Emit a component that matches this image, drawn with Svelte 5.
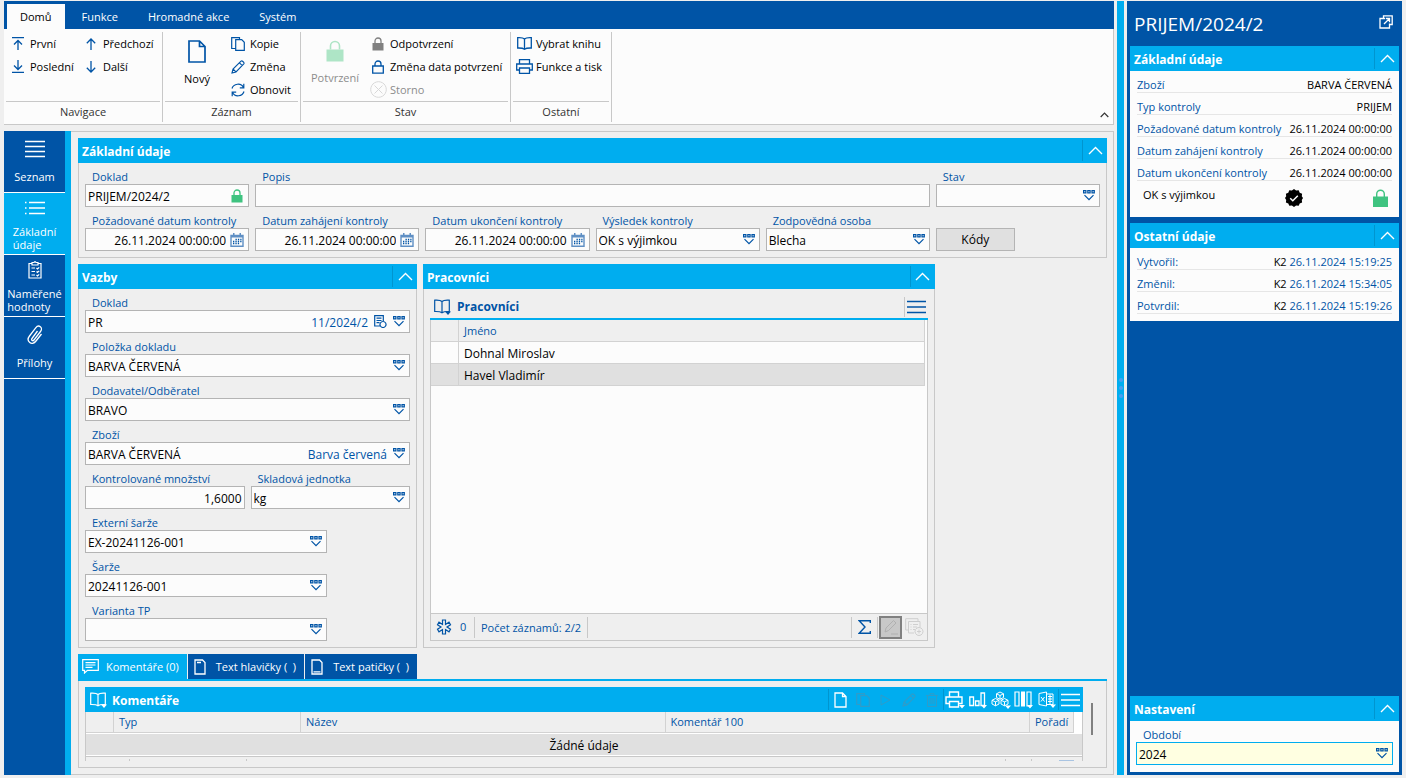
<script>
  // w, h = native size; d = stroked path; f = filled path; s = stroke width
  const icons = {
    first: { w: 12, h: 13, d: 'M0 .7H12M6 13V3.5M2 7.5l4-4 4 4', s: 1.3 },
    last: { w: 12, h: 13, d: 'M0 12.3H12M6 0v9.5M2 5.5l4 4 4-4', s: 1.3 },
    up: { w: 10, h: 12, d: 'M5 12V1M.8 5.2L5 1l4.2 4.2', s: 1.3 },
    down: { w: 10, h: 12, d: 'M5 0v11M.8 6.8L5 11l4.2-4.2', s: 1.3 },
    pageBig: { w: 18, h: 23, d: 'M1 1H11.5L17 6.5V22H1ZM11.5 1V6.5H17', s: 1.7 },
    page: { w: 13, h: 16, d: 'M1 1H8.5L12 4.5V15H1ZM8.5 1V4.5H12', s: 1.3 },
    copy: { w: 14, h: 14, d: 'M4.5 11.5H.7V.7H8.5V2.5M4.7 2.7h6l2.6 2.6v8H4.7Z', s: 1.2 },
    pencil: { w: 14, h: 14, d: 'M1 13l1-4L10 1.2c1-1 3.8 1.6 2.8 2.7L5 12ZM8.5 2.8l2.8 2.8M2 9l3 3', s: 1.1 },
    refresh: { w: 14, h: 14, d: 'M1 5.5C2.5 .5 10 -.5 12.5 4.5M12.8 .8V4.8H8.8M13 8.5C11.5 13.5 4 14.5 1.5 9.5M1.2 13.2V9.2H5.2', s: 1.2 },
    lock: { w: 14, h: 14, d: 'M4 6V4a3 3 0 0 1 6 0V6', f: 'M1.5 6h11v7.5h-11z', s: 1.3 },
    lockOpen: { w: 14, h: 14, d: 'M4 6V4a3 3 0 0 1 6 0V6M1.7 6h10.6v7.2H1.7z', s: 1.3 },
    lockMid: { w: 15, h: 18, d: 'M3.700 8V5a3.800 3.800 0 0 1 7.600 0v3', f: 'M0 7.500h15V18H0z', s: 1.4 },
    lockBig: { w: 18, h: 22, d: 'M4.5 9.5V6a4.5 4.5 0 0 1 9 0v3.5', f: 'M.5 9.5h17v12H.5z', s: 1.6 },
    cancel: { w: 17, h: 17, d: 'M8.5 .7a7.8 7.8 0 1 0 .01 0M4.5 4.5l8 8M12.5 4.5l-8 8', s: 1 },
    book: { w: 15, h: 13, d: 'M7.5 2C6 .4 3 .6 .7 .7V11c2.5 0 5-.2 6.800 1.300C9.300 10.800 12 11 14.300 11V.7C12 .6 9 .4 7.500 2V12', s: 1.3 },
    bookMenu: { w: 18, h: 16, d: 'M8 2.500C6.500 1 3.500 1 .7 1.200V12.500c3 0 5.500-.2 7.300 1.200 1.800-1.400 4.300-1.200 7.300-1.200V1.200C12.500 1 9.500 1 8 2.500V13.500', f: 'M11 12.500h6l-3 3.500z', s: 1.2 },
    printer: { w: 17, h: 15, d: 'M3.500 5V.7h10V5M3.500 11H.7V5h15.600v6H13.500M3.500 9h10v5.300h-10z', s: 1.3 },
    printerMenu: { w: 20, h: 18, d: 'M4.500 6V1h9V6M4 12.500H1V6h16v6.500H14M4.500 10.500h9V16h-9z', f: 'M14 14h6l-3 3.500z', s: 1.4 },
    chart: { w: 18, h: 18, d: 'M.8 6h3.700v8.500H.8zM6.500 10h3.500v4.500H6.500zM12 2h3.500v12.500H12z', f: 'M12 14h6l-3 3.500z', s: 1.3 },
    cubes: { w: 20, h: 18, d: 'M9 1l3.500 1.800v3.700L9 8.300 5.500 6.500V2.800zM5.500 2.800L9 4.500l3.500-1.700M9 4.500v3.800M4.500 7.500L8 9.300V13l-3.500 1.800L1 13V9.300zM1 9.300l3.500 1.500L8 9.300M4.500 10.800v4M13.500 7.500L17 9.300V13l-3.500 1.800L10 13V9.300zM10 9.300l3.500 1.500L17 9.300M13.500 10.800v4', f: 'M14 14.500h6l-3 3.500z', s: 1 },
    columns: { w: 20, h: 18, d: 'M1 1h4v14H1zM13 1h4v14h-4z', f: 'M7 .5h4v15H7zM13 14h6l-3 3.500z', s: 1.2 },
    excel: { w: 18, h: 17, d: 'M8 3h7v10.500H8M1 2.500L8.500 1v14L1 13.500zM3 6l3.500 4.500M6.500 6L3 10.500M10 5.500h4M10 8h4M10 10.500h4M12 3.500v10', f: 'M12 13.500h6l-3 3.500z', s: 1 },
    menu: { w: 19, h: 14, d: 'M0 1.500H19M0 7H19M0 12.500H19', s: 1.4 },
    play: { w: 11, h: 12, d: 'M1 1l9 5-9 5z', s: 1 },
    trash: { w: 12, h: 14, d: 'M0 2.500h12M4 2.500V.7h4v1.800M1.500 2.500v11h9v-11M4 5v6M6 5v6M8 5v6', s: 1 },
    chevron: { w: 15, h: 9, d: 'M1 8l6.500-6.500L14 8', s: 1.4 },
    chevronSmall: { w: 9, h: 6, d: 'M.7 5L4.500 1.200 8.300 5', s: 1.2 },
    more: { w: 12, h: 11, d: 'M.6 .6h2.300v2.300H.6zM4.800 .6h2.300v2.300H4.800zM9 .6h2.300v2.300H9zM1.500 5.200L6 9.700l4.500-4.500', s: 1.2 },
    calendar: { w: 14, h: 14, d: 'M1 2.500h12v10.700H1z', f: 'M1 2h12v2.500H1zM3 0h1.500v2H3zM9.500 0H11v2H9.500z', s: 1.4 },
    document: { w: 13, h: 13, d: 'M6 11H.7V.7h8.600V6M2.500 3.200h5M2.500 5.500h5M2.500 7.700h3M9 6.500a3 3 0 1 0 .01 0', s: 1.2 },
    list: { w: 20, h: 18, d: 'M0 1.500H20M0 6.500H20M0 11.500H20M0 16.500H20', s: 1.3 },
    bullets: { w: 20, h: 14, d: 'M0 1.500h1.500M0 7h1.500M0 12.500h1.500M4 1.500H20M4 7H20M4 12.500H20', s: 1.3 },
    clipboard: { w: 14, h: 18, d: 'M4 2.500H1v14.500h12V2.500h-3M4 1.500h2L7 .6l1 .9h2V4H4zM3.500 7h3.500M3.500 10.500h3.500M3.500 14h3.500M8.500 7l1 1 1.700-1.700M8.500 10.500l1 1 1.700-1.700M8.500 14l1 1 1.700-1.700', s: 1.2 },
    clip: { w: 16, h: 20, d: 'M10.500 6L5 13.500c-1.200 1.700.8 3 2 1.500l6.500-8.500c3-4-1.800-7.500-4.800-3.700L2.500 11c-4 5.300 2.500 10.500 6.500 5l5.500-7', s: 1.3 },
    comment: { w: 17, h: 15, d: 'M.7 .7h15.600v10.600H5.500L2.500 14v-2.700H.7zM3.500 3.700h10M3.500 6h10M3.500 8.300h7', s: 1.2 },
    headText: { w: 12, h: 16, d: 'M1 1h7.500L11 3.500V15H1zM3 3.500h4', s: 1.3 },
    footText: { w: 12, h: 16, d: 'M1 1h7.500L11 3.500V15H1zM2.500 12.800h7', s: 1.3 },
    asterisk: { w: 16, h: 16, d: 'M6.500 1h3v4.400L13 3.200l1.500 2.500L11 8l3.500 2.300-1.500 2.500-3.500-2.200V15h-3v-4.400L3 12.800l-1.500-2.500L5 8 1.500 5.700 3 3.200l3.500 2.200z', s: 1.2 },
    sigma: { w: 13, h: 14, d: 'M12.300 3V.8H1.200L7 7 1.200 13.200h11.100V11', s: 1.4 },
    editLine: { w: 16, h: 16, d: 'M2 13l1-4L10.500 1.500l2.500 2.500L5.500 11.500zM8 15h7', s: 1 },
    addRows: { w: 19, h: 18, d: 'M3 12H.7V.7H13V3M3.500 3.500h11.500V9M3.500 3.500V15H9M5.500 6.500h1M8 6.500h5M5.500 9h1M8 9h4M5.500 11.500h1M8 11.500h2M14 9.500a4 4 0 1 0 .01 0M12 13.500h4M14 11.500v4', s: 1 },
    external: { w: 14, h: 14, d: 'M6 3.500H1V13h9.500V8.500M4.500 3V.8h8.700V9.500H11M5 9l5.500-5.500M6.800 3.500h3.700v3.700', s: 1.3 }
  }

  const ribbonTabs = ['Domů', 'Funkce', 'Hromadné akce', 'Systém']

  const groups = [
    {
      name: 'Navigace', cls: 'nav',
      cols: [
        [['first', 'První'], ['last', 'Poslední']],
        [['up', 'Předchozí'], ['down', 'Další']]
      ]
    },
    {
      name: 'Záznam', cls: 'record',
      big: ['pageBig', 'Nový'],
      cols: [[['copy', 'Kopie'], ['pencil', 'Změna'], ['refresh', 'Obnovit']]]
    },
    {
      name: 'Stav', cls: 'state',
      big: ['lockBig', 'Potvrzení', 'off green'],
      cols: [[['lock', 'Odpotvrzení', 'gray'], ['lockOpen', 'Změna data potvrzení'], ['cancel', 'Storno', 'off']]]
    },
    {
      name: 'Ostatní', cls: 'other',
      cols: [[['book', 'Vybrat knihu'], ['printer', 'Funkce a tisk']]]
    }
  ]

  const pages = [
    { icon: 'list', label: 'Seznam' },
    { icon: 'bullets', label: 'Základní údaje', tall: true },
    { icon: 'clipboard', label: 'Naměřené hodnoty', tall: true },
    { icon: 'clip', label: 'Přílohy' }
  ]

  const basics = [
    { id: 'doklad', label: 'Doklad', value: 'PRIJEM/2024/2', icon: 'lock' },
    { id: 'popis', label: 'Popis', value: '', span: 4 },
    { id: 'stav', label: 'Stav', value: '', select: true },
    { id: 'pozadovane', label: 'Požadované datum kontroly', value: '26.11.2024 00:00:00', icon: 'calendar', right: true },
    { id: 'zahajeni', label: 'Datum zahájení kontroly', value: '26.11.2024 00:00:00', icon: 'calendar', right: true },
    { id: 'ukonceni', label: 'Datum ukončení kontroly', value: '26.11.2024 00:00:00', icon: 'calendar', right: true },
    { id: 'vysledek', label: 'Výsledek kontroly', value: 'OK s výjimkou', select: true },
    { id: 'osoba', label: 'Zodpovědná osoba', value: 'Blecha', icon: 'more' }
  ]

  const links = [
    { id: 'v-doklad', label: 'Doklad', value: 'PR', note: '11/2024/2', extra: 'document', icon: 'more', span: 4 },
    { id: 'v-polozka', label: 'Položka dokladu', value: 'BARVA ČERVENÁ', icon: 'more', span: 4 },
    { id: 'v-dodavatel', label: 'Dodavatel/Odběratel', value: 'BRAVO', icon: 'more', span: 4 },
    { id: 'v-zbozi', label: 'Zboží', value: 'BARVA ČERVENÁ', note: 'Barva červená', icon: 'more', span: 4 },
    { id: 'v-mnozstvi', label: 'Kontrolované množství', value: '1,6000', right: true, span: 2 },
    { id: 'v-jednotka', label: 'Skladová jednotka', value: 'kg', select: true, span: 2 },
    { id: 'v-externi', label: 'Externí šarže', value: 'EX-20241126-001', icon: 'more', span: 3 },
    { id: 'v-sarze', label: 'Šarže', value: '20241126-001', icon: 'more', span: 3 },
    { id: 'v-varianta', label: 'Varianta TP', value: '', icon: 'more', span: 3 }
  ]

  const workers = ['Dohnal Miroslav', 'Havel Vladimír']

  const textTabs = [
    { icon: 'comment', label: 'Komentáře (0)' },
    { icon: 'headText', label: 'Text hlavičky (  )' },
    { icon: 'footText', label: 'Text patičky (  )' }
  ]

  const tools = [
    ['page', 'Nový'], ['copy', 'Kopie', true], ['play', 'Spustit', true], ['pencil', 'Změna', true], ['trash', 'Smazat', true],
    ['printerMenu', 'Tisk'], ['chart', 'Graf'], ['cubes', 'Kostka'], ['columns', 'Sloupce'], ['excel', 'Excel'], ['menu', 'Nabídka']
  ]

  const summary = [
    ['Zboží', 'BARVA ČERVENÁ'],
    ['Typ kontroly', 'PRIJEM'],
    ['Požadované datum kontroly', '26.11.2024 00:00:00'],
    ['Datum zahájení kontroly', '26.11.2024 00:00:00'],
    ['Datum ukončení kontroly', '26.11.2024 00:00:00']
  ]

  const history = [
    ['Vytvořil:', '26.11.2024 15:19:25'],
    ['Změnil:', '26.11.2024 15:34:05'],
    ['Potvrdil:', '26.11.2024 15:19:26']
  ]

  let ribbonTab = $state(0)
  let page = $state(1)
  let textTab = $state(0)
  let selected = $state(1)
</script>

{#snippet icon(name)}
  {@const i = icons[name]}
  <svg class="icon {name}" width={i.w} height={i.h} viewBox="0 0 {i.w} {i.h}" aria-hidden="true">
    <path d={i.d} fill="none" stroke="currentColor" stroke-width={i.s} />
    {#if i.f}<path d={i.f} fill="currentColor" />{/if}
    {#if name === 'calendar'}
      <path class="days" d="M5.500 6.500h6M3 8.500h8.500M3 10.500h6.500" stroke-width="1.300" stroke-dasharray="1.300 1.100" />
    {/if}
  </svg>
{/snippet}

{#snippet head(title)}
  <header class="head">
    <h2>{title}</h2>
    <button class="collapse" aria-label="Sbalit {title}">{@render icon('chevron')}</button>
  </header>
{/snippet}

{#snippet field(f)}
  <div class="field span{f.span ?? 1}">
    <label for={f.id}>{f.label}</label>
    <div class="box" class:cal={f.icon === 'calendar'}>
      {#if f.select}
        <select id={f.id}><option>{f.value}</option></select>
        {@render icon('more')}
      {:else}
        <input id={f.id} type="text" value={f.value} class:right={f.right} />
        {#if f.note}<span class="note">{f.note}</span>{/if}
        {#if f.extra}<button aria-label="Otevřít {f.label}">{@render icon(f.extra)}</button>{/if}
        {#if f.icon === 'lock'}
          <span class="locked">{@render icon('lock')}</span>
        {:else if f.icon}
          <button aria-label="Vybrat {f.label}">{@render icon(f.icon)}</button>
        {/if}
      {/if}
    </div>
  </div>
{/snippet}

<div class="app">
  <div class="main">
    <div class="ribbon">
      <nav class="ribbon-tabs">
        {#each ribbonTabs as tab, i}
          <button class:active={i === ribbonTab} onclick={() => (ribbonTab = i)}>{tab}</button>
        {/each}
      </nav>
      <div class="groups">
        {#each groups as g}
          <section class="group {g.cls}">
            <div class="commands">
              {#if g.big}
                <button class="big {g.big[2] ?? ''}">{@render icon(g.big[0])}<span>{g.big[1]}</span></button>
              {/if}
              {#each g.cols as col}
                <div class="col">
                  {#each col as [name, label, cls]}
                    <button class="cmd {cls ?? ''}"><span class="slot">{@render icon(name)}</span>{label}</button>
                  {/each}
                </div>
              {/each}
            </div>
            <div class="group-name">{g.name}</div>
          </section>
        {/each}
        <button class="fold" aria-label="Sbalit pás">{@render icon('chevronSmall')}</button>
      </div>
    </div>

    <div class="work">
      <nav class="sidebar">
        {#each pages as p, i}
          <button class:active={i === page} class:tall={p.tall} onclick={() => (page = i)}>
            <span class="side-icon">{@render icon(p.icon)}</span>
            <span class="side-label">{p.label}</span>
          </button>
        {/each}
      </nav>

      <main class="content">
        <section class="panel wide">
          {@render head('Základní údaje')}
          <div class="fields six">
            {#each basics as f}
              {@render field(f)}
            {/each}
            <button class="codes">Kódy</button>
          </div>
        </section>

        <section class="panel links">
          {@render head('Vazby')}
          <div class="fields four">
            {#each links as f}
              {@render field(f)}
            {/each}
          </div>
        </section>

        <section class="panel workers">
          {@render head('Pracovníci')}
          <div class="grid">
            <div class="grid-title">
              {@render icon('bookMenu')}
              <h3>Pracovníci</h3>
              <button class="grid-menu" aria-label="Nabídka">{@render icon('menu')}</button>
            </div>
            <div class="grid-body">
              <table>
                <thead>
                  <tr><th class="mark"></th><th>Jméno</th></tr>
                </thead>
                <tbody>
                  {#each workers as w, i}
                    <tr class:selected={i === selected} onclick={() => (selected = i)}>
                      <td></td>
                      <td>{w}</td>
                    </tr>
                  {/each}
                </tbody>
              </table>
            </div>
            <footer class="grid-foot">
              <button class="star">{@render icon('asterisk')}<span>0</span></button>
              <span class="count">Počet záznamů: 2/2</span>
              <button class="sum" aria-label="Součet">{@render icon('sigma')}</button>
              <button class="edit" aria-label="Editace">{@render icon('editLine')}</button>
              <button class="add" aria-label="Přidat" disabled>{@render icon('addRows')}</button>
            </footer>
          </div>
        </section>

        <section class="texts">
          <div class="text-tabs">
            {#each textTabs as t, i}
              <button class:active={i === textTab} onclick={() => (textTab = i)}>
                <span class="tab-icon">{@render icon(t.icon)}</span><span>{t.label}</span>
              </button>
            {/each}
          </div>
          <div class="text-body">
            <div class="comments">
              <div class="head comments-head">
                {@render icon('bookMenu')}
                <h2>Komentáře</h2>
                <div class="tools">
                  {#each tools as [name, label, off]}
                    <button aria-label={label} disabled={off}>{@render icon(name)}</button>
                  {/each}
                </div>
              </div>
              <table>
                <thead>
                  <tr>
                    <th class="mark"></th>
                    <th class="type">Typ</th>
                    <th>Název</th>
                    <th>Komentář 100</th>
                    <th class="order">Pořadí</th>
                    <th class="rest"></th>
                  </tr>
                </thead>
                <tbody>
                  <tr><td class="empty" colspan="6">Žádné údaje</td></tr>
                </tbody>
              </table>
              <!-- top edge of the status bar, the rest is scrolled out -->
              <div class="clipped"><i></i><i></i><i></i><i></i><b></b></div>
            </div>
            <div class="scroll"><div class="thumb"></div></div>
          </div>
        </section>
      </main>
    </div>
  </div>

  <div class="splitter"><i></i><i></i><i></i></div>

  <aside class="preview">
    <div class="preview-title">
      <h1>PRIJEM/2024/2</h1>
      <button aria-label="Otevřít v novém okně">{@render icon('external')}</button>
    </div>

    <section class="card">
      {@render head('Základní údaje')}
      <dl>
        {#each summary as [name, value]}
          <div class="line"><dt>{name}</dt><dd>{value}</dd></div>
        {/each}
      </dl>
      <div class="result">
        <span>OK s výjimkou</span>
        <svg class="badge" width="18" height="18" viewBox="0 0 18 18" aria-hidden="true">
          <path d="M9 0l2.100 1.600 2.600-.3 1 2.400 2.400 1-.3 2.600L18 9l-1.200 1.900.3 2.500-2.400 1-1 2.400-2.600-.3L9 18l-2.100-1.500-2.600.3-1-2.400-2.400-1 .3-2.500L0 9l1.200-1.700-.3-2.600 2.400-1 1-2.400 2.600.3z" />
          <path d="M5.200 9.200l2.600 2.500 5-5" fill="none" stroke="#fff" stroke-width="1.500" />
        </svg>
        <span class="locked">{@render icon('lockMid')}</span>
      </div>
    </section>

    <section class="card">
      {@render head('Ostatní údaje')}
      <dl>
        {#each history as [name, time]}
          <div class="line"><dt>{name}</dt><dd>K2 <span>{time}</span></dd></div>
        {/each}
      </dl>
    </section>

    <section class="card settings">
      {@render head('Nastavení')}
      <div class="fields">
        {@render field({ id: 'obdobi', label: 'Období', value: '2024', select: true })}
      </div>
    </section>
  </aside>
</div>

<style>
  :global(body) {
    background: #efefef;
  }
  .app {
    --blue: #0054a6;
    --cyan: #00adef;
    --line: #c8c8c8;
    --paper: #fcfcfc;
    display: flex;
    box-sizing: border-box;
    min-height: 100vh;
    padding: 1px 4px 3px;
    font-family: 'Open Sans', 'Noto Sans', sans-serif;
    font-size: 11px;
    line-height: 16px;
    color: #000;
  }
  .app * { box-sizing: border-box; }
  h1, h2, h3, dl, dd { margin: 0; }
  button {
    padding: 0;
    border: 0;
    background: none;
    color: inherit;
    font: inherit;
    white-space: nowrap;
  }
  .icon { display: block; flex-shrink: 0; }
  table { border-collapse: separate; border-spacing: 0; }

  .main {
    flex: 1;
    min-width: 0;
    display: flex;
    flex-direction: column;
  }

  /* ribbon */
  .ribbon {
    background: var(--paper);
    border-bottom: 1px solid var(--line);
    border-right: 1px solid var(--line);
  }
  .ribbon-tabs {
    display: flex;
    gap: 4px;
    height: 28px;
    padding: 3px 3px 0;
    background: var(--blue);
    color: #fff;
    margin-right: -1px;
  }
  .ribbon-tabs button { padding: 0 13px; }
  .ribbon-tabs .active { background: var(--paper); color: #000; }
  .groups {
    display: flex;
    height: 95px;
    padding: 3px 0 2px;
  }
  .group {
    display: flex;
    flex-direction: column;
    padding: 0 2px;
    border-right: 1px solid var(--line);
  }
  .nav { width: 159px; }
  .record { width: 138px; }
  .state { width: 210px; }
  .other { width: 101px; }
  .commands {
    flex: 1;
    display: flex;
    border-bottom: 1px solid var(--line);
  }
  .group-name {
    height: 20px;
    line-height: 20px;
    text-align: center;
    color: #333;
  }
  .cmd {
    display: flex;
    align-items: center;
    height: 23px;
  }
  .slot {
    display: flex;
    justify-content: center;
    width: 18px;
    margin-right: 3px;
    color: var(--blue);
  }
  .nav .col { width: 73px; padding-left: 3px; }
  .big {
    display: flex;
    flex-direction: column;
    align-items: center;
    gap: 8px;
    width: 64px;
    padding-top: 8px;
    align-self: flex-start;
  }
  .big .icon { color: var(--blue); }
  .off, .off .slot { color: #8c8c8c; }
  .off .cancel { color: #d8d8d8; }
  .green .icon { color: #aee5c6; }
  .gray .slot { color: #808080; }
  .state .col { padding-left: 2px; }
  .other .col { padding-left: 2px; }
  .fold {
    margin-left: auto;
    align-self: flex-end;
    padding: 4px;
    color: #333;
  }

  /* left navigation and content */
  .work {
    flex: 1;
    display: flex;
    padding-top: 6px;
  }
  .sidebar {
    flex-shrink: 0;
    width: 67px;
    border-right: 6px solid var(--cyan);
    background: var(--blue);
    color: #fff;
  }
  .sidebar button {
    display: flex;
    flex-direction: column;
    align-items: center;
    width: 100%;
    height: 62px;
    padding-top: 6px;
    border-bottom: 1px solid #fff;
    white-space: normal;
  }
  .sidebar .active { background: var(--cyan); }
  .side-icon {
    display: flex;
    align-items: center;
    height: 24px;
    margin-bottom: 1px;
  }
  .tall .side-icon {
    height: 18px;
    margin-bottom: 7px;
  }
  .side-label {
    display: flex;
    align-items: center;
    height: 28px;
    width: min-content;
    line-height: 13px;
    text-align: left;
  }
  .content {
    flex: 1;
    min-width: 0;
    display: grid;
    grid-template-columns: repeat(6, minmax(0, 1fr));
    grid-template-rows: auto auto 1fr;
    gap: 6px;
    padding: 6px 6px 6px 7px;
    border: 1px solid var(--line);
    border-left: 0;
  }

  .panel { border: 1px solid var(--line); border-top: 0; display: flex; flex-direction: column; }
  .wide, .texts { grid-column: span 6; }
  .links { grid-column: span 2; }
  .workers { grid-column: span 3; }
  .head {
    display: flex;
    align-items: center;
    height: 25px;
    background: var(--cyan);
    color: #fff;
  }
  .panel > .head { margin: 0 -1px; }
  h2, h3 { font-size: 12px; font-weight: 700; }
  .head h2 { padding: 2px 0 0 4px; }
  .collapse {
    display: flex;
    align-items: center;
    justify-content: center;
    width: 25px;
    height: 21px;
    margin-left: auto;
    border-left: 1px solid #0095cf;
  }

  .fields {
    display: grid;
    column-gap: 6px;
    padding: 0 6px 6px;
  }
  .six { grid-template-columns: repeat(6, minmax(0, 1fr)); }
  .four { grid-template-columns: repeat(4, minmax(0, 1fr)); }
  .span2 { grid-column: span 2; }
  .span3 { grid-column: span 3; }
  .span4 { grid-column: span 4; }
  .field { min-width: 0; }
  .field label {
    display: block;
    height: 21px;
    padding: 6px 0 0 7px;
    line-height: 15px;
    color: var(--blue);
    white-space: nowrap;
  }
  .box {
    display: flex;
    align-items: center;
    gap: 6px;
    height: 23px;
    padding-right: 4px;
    border: 1px solid #b4b4b4;
    background: var(--paper);
    color: var(--blue);
    font-size: 12px;
  }
  .cal { gap: 2px; }
  .calendar { color: #5f8fc4; }
  .days { stroke: var(--blue); }
  .note { padding-top: 2px; }
  input, select {
    flex: 1;
    min-width: 0;
    height: 21px;
    padding: 2px 2px 0;
    border: 0;
    outline: 0;
    border-radius: 0;
    background: none;
    appearance: none;
    font: inherit;
    color: #000;
  }
  .right { text-align: right; }
  .box:has(.right:last-child) { padding-right: 0; }
  .locked { color: #3fc380; }
  .codes {
    align-self: end;
    width: 79px;
    height: 23px;
    border: 1px solid #b4b4b4;
    background: #e0e0e0;
    font-size: 12px;
  }

  /* workers grid */
  .grid {
    flex: 1;
    display: flex;
    flex-direction: column;
    padding: 0 6px 6px;
    color: var(--blue);
  }
  .grid-title {
    display: flex;
    align-items: center;
    gap: 5px;
    height: 31px;
    padding: 6px 2px 0 4px;
    border-bottom: 2px solid var(--cyan);
  }
  .grid-menu {
    margin-left: auto;
    padding: 3px 0 3px 2px;
    border-left: 1px solid var(--line);
  }
  .grid-body {
    flex: 1;
    padding-right: 2px;
    border: 1px solid var(--line);
    border-top: 0;
    background: var(--paper);
  }
  .grid-body table { width: 100%; table-layout: fixed; }
  th { font-weight: 400; text-align: left; background: #efefef; }
  th, td { padding: 0 5px; border: 0 solid #d2d2d2; border-width: 0 1px 1px 0; }
  td { padding-top: 2px; }
  .grid-body th, .grid-body td { height: 22px; }
  td { color: #000; font-size: 12px; }
  .mark { width: 28px; }
  .selected td { background: #e0e0e0; }
  .grid-foot {
    display: flex;
    align-items: center;
    height: 27px;
    padding-right: 3px;
    border: 1px solid var(--line);
    border-top: 0;
  }
  .grid-foot > * { height: 21px; }
  .star {
    display: flex;
    align-items: center;
    gap: 8px;
    width: 44px;
    padding-left: 5px;
    border-right: 1px solid var(--line);
  }
  .count {
    line-height: 21px;
    padding: 0 6px;
    border-right: 1px solid var(--line);
  }
  .sum {
    width: 27px;
    padding-left: 6px;
    margin-left: auto;
    border: 0 solid var(--line);
    border-width: 0 1px;
  }
  .grid-foot .edit {
    width: 23px;
    height: 23px;
    margin: 0 3px 0 1px;
    padding-left: 2px;
    border: 2px solid #808080;
    background: #c8c8c8;
    color: #b0b0b0;
  }
  .add { color: #cfcfcf; }

  /* comments and texts */
  .texts { display: flex; flex-direction: column; }
  .text-tabs {
    display: flex;
    gap: 1px;
    border-bottom: 2px solid var(--cyan);
    color: #fff;
  }
  .text-tabs button {
    display: flex;
    align-items: center;
    gap: 7px;
    height: 25px;
    padding: 0 8px 0 3px;
    background: var(--blue);
    white-space: pre;
  }
  .tab-icon {
    display: flex;
    justify-content: center;
    width: 18px;
  }
  .text-tabs .active { background: var(--cyan); }
  .text-body {
    flex: 1;
    display: flex;
    padding: 6px;
    border: 1px solid var(--line);
    border-top: 0;
    color: var(--blue);
  }
  .comments { flex: 1; min-width: 0; }
  .comments-head { padding-left: 5px; }
  .tools {
    display: flex;
    margin-left: auto;
    padding-right: 2px;
  }
  .tools button {
    display: flex;
    align-items: center;
    justify-content: center;
    width: 23px;
    height: 21px;
    color: #fff;
  }
  .tools button:nth-child(1), .tools button:nth-child(6), .tools button:last-child { border-left: 1px solid #0095cf; }
  .tools button:disabled { color: #2f9cc9; }
  .comments table {
    width: 100%;
    table-layout: fixed;
    border: 1px solid var(--line);
    border-width: 0 1px 1px 1px;
    background: #fff;
  }
  .comments th { height: 21px; }
  .comments .type { width: 187px; }
  .comments .order { width: 44px; }
  .comments .rest { width: 8px; padding: 0; background: #fff; border: 0; }
  .comments .empty {
    height: 23px;
    border: 1px solid #fff;
    border-width: 1px 0;
    background: #e0e0e0;
    text-align: center;
  }
  .clipped {
    display: flex;
    align-items: flex-end;
    height: 4px;
    padding-right: 8px;
    border: 1px solid var(--line);
    border-width: 0 1px;
  }
  .clipped i { width: 1px; height: 2px; background: var(--line); }
  .clipped i:nth-child(1) { margin-left: 43px; }
  .clipped i:nth-child(2) { margin: 0 auto 0 116px; }
  .clipped i:nth-child(4) { margin: 0 27px 0 25px; }
  .clipped b { width: 15px; height: 1px; background: #a9c4e2; }
  .scroll { width: 17px; padding: 16px 0 0 8px; }
  .thumb { width: 2px; height: 32px; background: #808080; }

  .splitter {
    flex-shrink: 0;
    display: flex;
    flex-direction: column;
    align-items: center;
    justify-content: center;
    gap: 4px;
    width: 7px;
    margin: 0 3px;
    background: var(--cyan);
  }
  .splitter i {
    width: 4px;
    height: 4px;
    border-radius: 50%;
    background: #4a9ff0;
  }

  /* preview */
  .preview {
    flex-shrink: 0;
    display: flex;
    flex-direction: column;
    gap: 6px;
    width: 275px;
    padding: 0 3px 3px;
    background: var(--blue);
  }
  .preview-title {
    display: flex;
    align-items: center;
    justify-content: space-between;
    height: 39px;
    padding: 3px 6px 0 4px;
    color: #fff;
  }
  h1 { padding-top: 3px; font-size: 19px; line-height: 24px; font-weight: 400; }
  .card {
    padding-bottom: 7px;
    background: var(--paper);
  }
  .line {
    display: flex;
    justify-content: space-between;
    height: 22px;
    margin: 0 7px;
    padding-top: 6px;
    line-height: 15px;
    border-bottom: 1px solid #e6e6e6;
    white-space: nowrap;
  }
  dt, .line span { color: var(--blue); }
  .result {
    display: flex;
    justify-content: space-between;
    height: 29px;
    padding: 8px 11px 0 13px;
    line-height: 12px;
  }
  .settings { margin-top: auto; padding-bottom: 1px; }
  .settings .box { border-color: var(--cyan); background: #ffffe1; }
</style>
